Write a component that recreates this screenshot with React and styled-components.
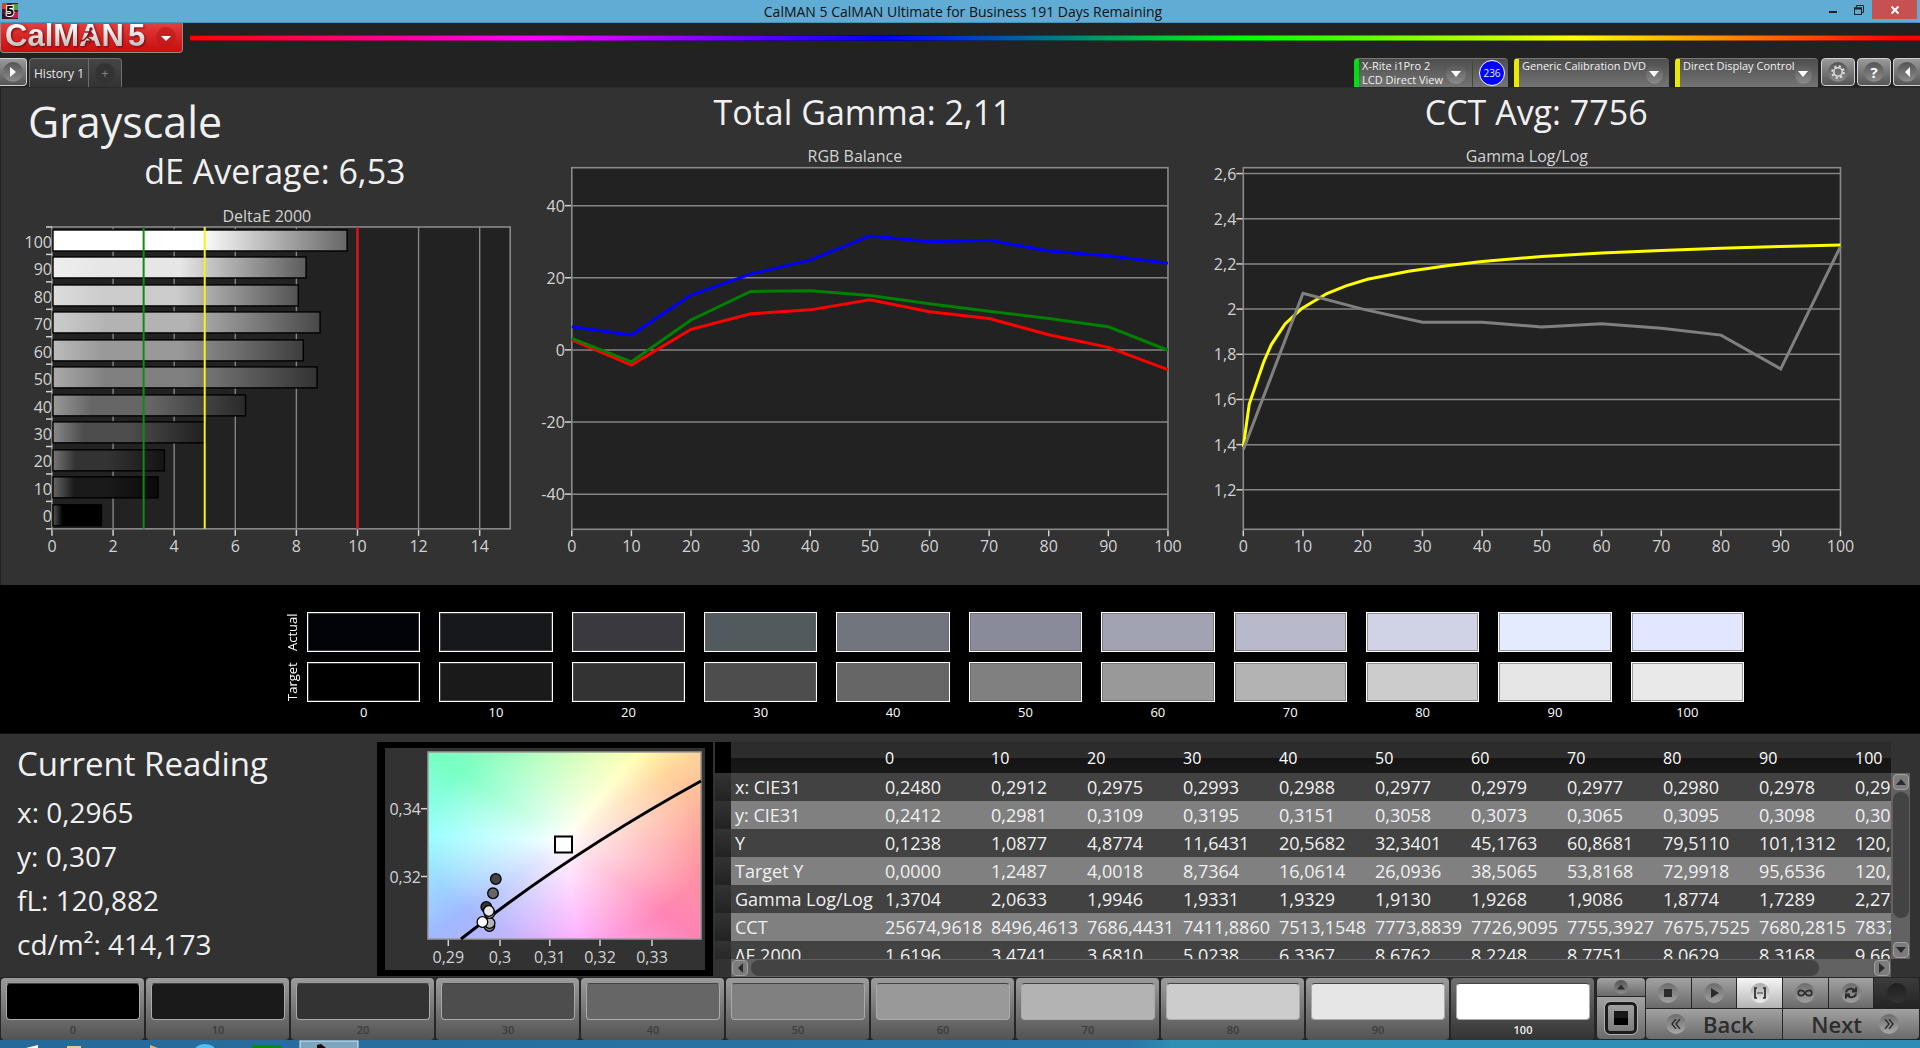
import styled, { createGlobalStyle, css } from 'styled-components';

const GlobalStyle = createGlobalStyle`
  * { box-sizing: border-box; }
  body {
    margin: 0;
    background: #323232;
    color: #f0f0f0;
    font-family: "Open Sans", "Noto Sans", sans-serif;
    overflow: hidden;
  }
  button {
    border: 0;
    padding: 0;
    font-family: inherit;
    color: inherit;
    background: none;
  }
`;

/* ---------- data ---------- */

const levels = [0, 10, 20, 30, 40, 50, 60, 70, 80, 90, 100];
const grays = [0, 26, 51, 77, 102, 128, 153, 179, 204, 230, 255];

const actual = ['#020308', '#16181c', '#3a393f', '#535a5d', '#71757e', '#8a8b9a', '#a1a3b2', '#b9b9cc', '#d0d3e6', '#e5ebff', '#e2e6ff'];
const target = ['#000000', '#1a1a1a', '#333333', '#4d4d4d', '#666666', '#808080', '#999999', '#b3b3b3', '#cccccc', '#e6e6e6', '#e9e9e9'];

const deltaE = [1.6196, 3.4741, 3.681, 5.0238, 6.3367, 8.6762, 8.2248, 8.7751, 8.0629, 8.3168, 9.66];

const rgbLines = [
  { color: '#0000ff', values: [6.4, 4.1, 15.2, 21, 24.9, 31.6, 30, 30.4, 27.4, 26.1, 24] },
  { color: '#ff0000', values: [2.8, -4.2, 5.7, 10, 11.1, 13.9, 10.6, 8.7, 4.2, 0.7, -5.5] },
  { color: '#008000', values: [3.2, -3.3, 8.3, 16.2, 16.4, 15.1, 12.8, 10.7, 8.7, 6.4, -0.1] },
];

const gammaTarget = [
  [0, 1.39], [1, 1.58], [3.4, 1.765], [4.7, 1.843], [7, 1.934], [9.8, 2.003], [14, 2.069],
  [17.2, 2.103], [20.8, 2.132], [27.7, 2.168], [34.4, 2.193], [40, 2.211], [50, 2.233],
  [60, 2.248], [70, 2.26], [80, 2.269], [90, 2.277], [100, 2.284],
];
const gammaMeasured = [1.378, 2.07, 2.0, 1.942, 1.942, 1.921, 1.935, 1.915, 1.885, 1.735, 2.277];

const rows = [
  ['x: CIE31', '0,2480', '0,2912', '0,2975', '0,2993', '0,2988', '0,2977', '0,2979', '0,2977', '0,2980', '0,2978', '0,2965'],
  ['y: CIE31', '0,2412', '0,2981', '0,3109', '0,3195', '0,3151', '0,3058', '0,3073', '0,3065', '0,3095', '0,3098', '0,3070'],
  ['Y', '0,1238', '1,0877', '4,8774', '11,6431', '20,5682', '32,3401', '45,1763', '60,8681', '79,5110', '101,1312', '120,8820'],
  ['Target Y', '0,0000', '1,2487', '4,0018', '8,7364', '16,0614', '26,0936', '38,5065', '53,8168', '72,9918', '95,6536', '120,8820'],
  ['Gamma Log/Log', '1,3704', '2,0633', '1,9946', '1,9331', '1,9329', '1,9130', '1,9268', '1,9086', '1,8774', '1,7289', '2,2740'],
  ['CCT', '25674,9618', '8496,4613', '7686,4431', '7411,8860', '7513,1548', '7773,8839', '7726,9095', '7755,3927', '7675,7525', '7680,2815', '7837,0000'],
  ['ΔE 2000', '1,6196', '3,4741', '3,6810', '5,0238', '6,3367', '8,6762', '8,2248', '8,7751', '8,0629', '8,3168', '9,6600'],
];

/* ---------- window chrome ---------- */

const Page = styled.div`
  display: flex;
  flex-direction: column;
`;

const TitleBar = styled.header`
  display: flex;
  align-items: flex-start;
  height: 23px;
  background: #60acd5;
  border-bottom: 1px solid #4a8fb5;
  color: #111;
`;

const AppIcon = styled.svg`
  margin: 3px 0 0 2px;
  overflow: visible;
`;

const WindowTitle = styled.span`
  flex: 1;
  padding-left: 88px;
  text-align: center;
  font-size: 14px;
  line-height: 23px;
`;

const WindowButtons = styled.div`
  display: flex;
  margin-right: 3px;
`;

const WindowButton = styled.button`
  display: flex;
  align-items: center;
  justify-content: center;
  width: ${({ $close }) => ($close ? 45 : 26)}px;
  height: 19px;
  background: ${({ $close }) => ($close ? '#c75050' : 'transparent')};
`;

const Header = styled.div`
  background: #222;
  border-bottom: 1px solid #2a2a2a;
`;

const BrandRow = styled.div`
  display: flex;
  gap: 7px;
`;

const Brand = styled.button`
  display: flex;
  width: 183px;
  height: 30px;
  border: 1px solid #8c8c8c;
  border-top: 0;
  border-radius: 0 0 4px 4px;
  background: linear-gradient(#e24040, #d62424 50%, #c90d0d);
`;

const LogoSvg = styled.svg`
  overflow: visible;
  text {
    font: 700 31px "Liberation Sans", sans-serif;
    fill: url(#metal);
    filter: drop-shadow(1px 1px 1px rgba(90, 0, 0, 0.8));
  }
`;

const Rainbow = styled.div`
  flex: 1;
  height: 6px;
  margin-top: 12px;
  border-top: 1px solid rgba(0, 0, 0, 0.4);
  border-bottom: 1px solid rgba(0, 0, 0, 0.4);
  background: linear-gradient(90deg, #f00, #f0f 20%, #00f 40%, #0f0 61%, #ff0 80%, #f00 99%);
`;

const TabRow = styled.div`
  display: flex;
  justify-content: space-between;
  padding-top: 5px;
`;

const Group = styled.div`
  display: flex;
  align-items: flex-start;
  gap: ${({ $gap }) => $gap || 0}px;
`;

const ToolButton = styled.button`
  display: flex;
  align-items: center;
  justify-content: center;
  width: ${({ $w }) => $w}px;
  height: 28px;
  border: 1px solid #d0d0d0;
  border-radius: ${({ $radius }) => $radius || '4px'};
  ${({ $side }) => $side && css`border-${$side}: 0;`}
  background: linear-gradient(#9a9a9a, #555);
`;

const Round = styled.span`
  display: flex;
  align-items: center;
  justify-content: center;
  width: ${({ $d }) => $d || 20}px;
  height: ${({ $d }) => $d || 20}px;
  border-radius: 50%;
  background: ${({ $bg }) => $bg || 'linear-gradient(#555, #8c8c8c)'};
`;

const HelpMark = styled(Round)`
  color: #fff;
  font-size: 15px;
  font-weight: 700;
  line-height: 20px;
`;

const Tabs = styled.div`
  display: flex;
  height: 29px;
  margin-left: 2px;
  border: 1px solid #6e6e6e;
  border-bottom: 0;
  border-radius: 4px 4px 0 0;
  background: linear-gradient(#454545, #333);
`;

const Tab = styled.button`
  display: flex;
  align-items: center;
  justify-content: center;
  width: ${({ $w }) => $w}px;
  font-size: 12px;
  color: #e8e8e8;
  & + & {
    border-left: 1px solid #6e6e6e;
    color: #888;
  }
`;

const Device = styled.div`
  display: flex;
  height: 29px;
  border-left: 5px solid ${({ $mark }) => $mark};
  border-top: 1px solid #777;
  border-radius: 4px 4px 0 0;
  background: linear-gradient(#4e4e4e, #747474);
`;

const DeviceButton = styled.button`
  display: flex;
  justify-content: space-between;
  width: ${({ $w }) => $w}px;
  padding: 0 6px 0 3px;
  font-size: 11px;
  line-height: 14px;
  text-align: left;
  white-space: nowrap;
  ${Round} { margin-top: 5px; }
`;

const Counter = styled.span`
  display: flex;
  align-items: center;
  justify-content: center;
  width: 26px;
  height: 26px;
  margin: 1px 3px 0 6px;
  border: 1px solid #fff;
  border-radius: 50%;
  background: #00f;
  font-size: 10px;
`;

const Divider = styled.span`
  width: 1px;
  margin-top: 2px;
  background: #444;
`;

/* ---------- charts ---------- */

const Charts = styled.section`
  display: grid;
  grid-template-columns: 540fr 660fr 720fr;
  align-items: start;
  padding-bottom: 15px;
  border-left: 1px solid #222;
`;

const Heading = styled.h1`
  margin: 0;
  padding: 9px 0 0 27px;
  font-size: 43px;
  font-weight: 400;
  line-height: 50px;
`;

const Metric = styled.h2`
  margin: 0;
  padding: 0 ${({ $right }) => $right || 0}px 0 ${({ $left }) => $left || 0}px;
  font-size: 34px;
  font-weight: 400;
  line-height: 48px;
  text-align: center;
`;

const ChartSvg = styled.svg`
  display: block;
  width: 100%;
  margin-top: 9px;
  font-size: 16px;
`;

const gridColor = '#858585';
const labelColor = '#d2d2d2';

function Frame({ box }) {
  return <rect x={box.x} y={box.y} width={box.w} height={box.h} fill="none" stroke="#8a8a8a" strokeWidth="1.6" />;
}

function BottomAxis({ box, ticks, scale }) {
  const y = box.y + box.h;
  return ticks.map((t) => (
    <g key={t}>
      <line x1={scale(t)} x2={scale(t)} y1={y + 1} y2={y + 7} stroke={labelColor} strokeWidth="1.5" />
      <text x={scale(t)} y={y + 23} textAnchor="middle" fill={labelColor}>{t}</text>
    </g>
  ));
}

function DeltaChart() {
  const box = { x: 51, y: 23, w: 458.5, h: 302 };
  const x = (v) => box.x + (v * box.w) / 15;
  const band = box.h / 11;
  const ticks = [0, 2, 4, 6, 8, 10, 12, 14];
  return (
    <ChartSvg viewBox="0 0 540 366">
      <defs>
        {grays.map((g, i) => {
          const light = Math.round(g + (255 - g) * 0.33);
          const dark = Math.round(g * 0.4);
          return (
            <linearGradient id={`bar${i}`} key={g}>
              <stop offset="0" stopColor={`rgb(${light},${light},${light})`} />
              <stop offset="0.2" stopColor={`rgb(${g},${g},${g})`} />
              <stop offset="0.5" stopColor={`rgb(${g},${g},${g})`} />
              <stop offset="1" stopColor={`rgb(${dark},${dark},${dark})`} />
            </linearGradient>
          );
        })}
      </defs>
      <text x="266" y="18" textAnchor="middle" fill={labelColor}>DeltaE 2000</text>
      <rect x={box.x} y={box.y} width={box.w} height={box.h} fill="#222" />
      {ticks.slice(1).map((t) => (
        <line key={t} x1={x(t)} x2={x(t)} y1={box.y} y2={box.y + box.h} stroke={gridColor} strokeWidth="1.4" />
      ))}
      <Frame box={box} />
      {levels.map((level, i) => {
        const top = box.y + (10 - i) * band;
        return (
          <g key={level}>
            <rect x={box.x + 1} y={Math.round(top + 3)} width={x(deltaE[i]) - box.x - 1} height="21" fill={`url(#bar${i})`} stroke="#000" strokeWidth="1.4" />
            <line x1={box.x - 6} x2={box.x} y1={top} y2={top} stroke={labelColor} strokeWidth="1.5" />
            <text x={box.x} y={top + 21} textAnchor="end" fill={labelColor}>{level}</text>
          </g>
        );
      })}
      <line x1={box.x - 6} x2={box.x} y1={box.y + box.h} y2={box.y + box.h} stroke={labelColor} strokeWidth="1.5" />
      {[[3, '#108a10'], [5, '#f7f01c'], [10, '#ff0808']].map(([v, color]) => (
        <line key={v} x1={x(v)} x2={x(v)} y1={box.y} y2={box.y + box.h} stroke={color} strokeWidth="2" />
      ))}
      <BottomAxis box={box} ticks={ticks} scale={x} />
    </ChartSvg>
  );
}

function LineChart({ title, width, box, ticks, y, children }) {
  const x = (v) => box.x + (v * box.w) / 100;
  return (
    <ChartSvg viewBox={`0 0 ${width} 425`}>
      <text x={box.x + box.w / 2 - 15} y="17" textAnchor="middle" fill={labelColor}>{title}</text>
      <rect x={box.x} y={box.y} width={box.w} height={box.h} fill="#222" />
      {ticks.map((t) => (
        <g key={t}>
          <line x1={box.x} x2={box.x + box.w} y1={y(t)} y2={y(t)} stroke={gridColor} strokeWidth="1.5" />
          <line x1={box.x - 7} x2={box.x} y1={y(t)} y2={y(t)} stroke={labelColor} strokeWidth="1.5" />
          <text x={box.x - 7} y={y(t) + 6} textAnchor="end" fill={labelColor}>{String(t).replace('.', ',')}</text>
        </g>
      ))}
      <Frame box={box} />
      {children(x)}
      <BottomAxis box={box} ticks={levels} scale={x} />
    </ChartSvg>
  );
}

function RgbChart() {
  const y = (v) => 205 - v * 3.608;
  return (
    <LineChart title="RGB Balance" width={660} box={{ x: 30.8, y: 22.7, w: 596.5, h: 361.8 }} ticks={[40, 20, 0, -20, -40]} y={y}>
      {(x) => rgbLines.map(({ color, values }) => (
        <polyline
          key={color}
          points={values.map((v, i) => `${x(i * 10)},${y(v)}`).join(' ')}
          fill="none"
          stroke={color}
          strokeWidth="3"
        />
      ))}
    </LineChart>
  );
}

function GammaChart() {
  const y = (v) => 28.6 + (2.6 - v) * 226;
  return (
    <LineChart title="Gamma Log/Log" width={720} box={{ x: 43.3, y: 22.7, w: 597.5, h: 361.8 }} ticks={[2.6, 2.4, 2.2, 2, 1.8, 1.6, 1.4, 1.2]} y={y}>
      {(x) => (
        <>
          <polyline points={gammaTarget.map(([a, b]) => `${x(a)},${y(b)}`).join(' ')} fill="none" stroke="#ffff00" strokeWidth="3" />
          <polyline points={gammaMeasured.map((v, i) => `${x(i * 10)},${y(v)}`).join(' ')} fill="none" stroke="#808080" strokeWidth="3" />
        </>
      )}
    </LineChart>
  );
}

/* ---------- swatches ---------- */

const SwatchBand = styled.section`
  padding: 27px 176px 11px 282px;
  background: #000;
`;

const SwatchRow = styled.div`
  display: grid;
  grid-template-columns: 25px 1fr;
  margin-bottom: ${({ $gap }) => $gap || 0}px;
`;

const SwatchName = styled.span`
  writing-mode: vertical-rl;
  transform: rotate(180deg);
  height: 40px;
  font-size: 13px;
  line-height: 21px;
  text-align: center;
  white-space: nowrap;
  color: #fff;
`;

const SwatchGrid = styled.div`
  display: grid;
  grid-template-columns: repeat(11, 1fr);
  gap: 19px;
  font-size: 13px;
  line-height: 20px;
  text-align: center;
  color: #fff;
`;

const Swatch = styled.div`
  height: 40px;
  border: 1px solid #fff;
  box-shadow: inset 0 0 0 1px rgba(100, 100, 100, 0.6);
  background: ${({ $color }) => $color};
`;

/* ---------- readings ---------- */

const Bottom = styled.section`
  display: flex;
  padding: 8px 10px 0 17px;
  border-top: 1px solid #111;
`;

const Reading = styled.div`
  width: 360px;
  font-size: 28px;
  line-height: 44px;
  h2 {
    margin: 0 0 4px;
    font-size: 33px;
    font-weight: 400;
    line-height: 44px;
  }
  p { margin: 0; }
`;

const CiePanel = styled.div`
  height: 234px;
  padding: 6px 8px;
  background: #000;
`;

/* chromaticity colours around the white point */
const CieSvg = styled.svg`
  display: block;
  font-size: 16px;
  background:
    radial-gradient(ellipse at 50% 47%, #fff 0, rgba(255, 255, 255, 0.7) 18%, rgba(255, 255, 255, 0) 72%) 43px 4px / 273px 187px no-repeat,
    conic-gradient(from 0deg at 50% 47%, #c4ffb4 0deg, #ffffb4 41deg, #ffd49a 57deg, #ff9c9c 92deg, #ff84b4 126deg, #ffb0ff 172deg, #a0b8ff 234deg, #98ffff 272deg, #78ffc4 303deg, #c4ffb4 360deg) 43px 4px / 273px 187px no-repeat,
    #323232;
`;

function CieChart() {
  const dots = [
    [110.8, 131, '#444'], [108, 145.3, '#666'], [101.3, 159, '#333'], [104.4, 178, '#808080'],
    [104.6, 175, '#b3b3b3'], [104.5, 165, '#ccc'], [103.8, 163, '#e6e6e6'], [97.4, 174, '#fff'],
  ];
  return (
    <CieSvg width="320" height="222" viewBox="0 0 320 222">
      <rect x="43" y="4" width="273" height="187" fill="none" stroke="#999" strokeWidth="1.5" />
      <path d="M76 191Q185 105 316 33" fill="none" stroke="#000" strokeWidth="3" />
      <rect x="170" y="88.5" width="17" height="16" fill="#fff" stroke="#000" strokeWidth="2" />
      {dots.map(([cx, cy, fill]) => (
        <circle key={`${cx}-${cy}`} cx={cx} cy={cy} r="5.3" fill={fill} stroke="#000" strokeWidth="1.3" />
      ))}
      {[['0,34', 60.7], ['0,32', 128.5]].map(([t, y]) => (
        <g key={t}>
          <line x1="36" x2="42" y1={y} y2={y} stroke={labelColor} strokeWidth="1.5" />
          <text x="36" y={y + 6} textAnchor="end" fill={labelColor}>{t}</text>
        </g>
      ))}
      {[['0,29', 63.3], ['0,3', 115], ['0,31', 164.8], ['0,32', 215], ['0,33', 267]].map(([t, x]) => (
        <g key={t}>
          <line x1={x} x2={x} y1="192" y2="198" stroke={labelColor} strokeWidth="1.5" />
          <text x={x} y="215" textAnchor="middle" fill={labelColor}>{t}</text>
        </g>
      ))}
    </CieSvg>
  );
}

const DataPanel = styled.div`
  flex: 1;
  min-width: 0;
  display: grid;
  grid-template-columns: 1fr 19px;
  grid-template-rows: 217px 18px;
  margin-left: 2px;
`;

const TableClip = styled.div`
  overflow: hidden;
`;

const Table = styled.table`
  width: 1231px;
  table-layout: fixed;
  border-collapse: collapse;
  font-size: 18px;
  white-space: nowrap;
  th, td {
    padding: 0 0 0 5px;
    font-weight: 400;
    text-align: left;
    line-height: 28px;
  }
  tbody th { padding-left: 4px; }
  thead th {
    height: 31px;
    padding-top: 1px;
    font-size: 16px;
    color: #fff;
    background: linear-gradient(#2c2c2c, #2c2c2c 50%, #141414 51%, #181818);
  }
  thead td { background: #000; }
  tbody td:first-child { background: linear-gradient(#333, #222); }
`;

const Row = styled.tr`
  height: 28px;
  background: ${({ $odd }) => ($odd ? '#808080' : '#424242')};
`;

const VScroll = styled.div`
  display: flex;
  flex-direction: column;
  align-items: center;
  margin-top: 31px;
  padding: 1px;
  background: #626262;
`;

const HScroll = styled.div`
  display: flex;
  align-items: center;
  margin-left: 16px;
  padding: 1px;
  background: #626262;
`;

const ScrollButton = styled.button`
  display: flex;
  flex: none;
  align-items: center;
  justify-content: center;
  width: 16px;
  height: 16px;
  border: 1px solid #a0a0a0;
  border-radius: 4px;
  background: #7c7c7c;
`;

const VThumb = styled.div`
  width: 16px;
  height: 126px;
  margin: 2px 0 auto;
  border-radius: 8px;
  background: #434343;
`;

const HThumb = styled.div`
  flex: 1;
  height: 16px;
  margin: 0 55px 0 3px;
  border-radius: 8px;
  background: #434343;
`;

/* ---------- pattern bar ---------- */

const PatternBar = styled.footer`
  display: flex;
  gap: 3px;
  height: 63px;
  padding: 1px;
  background: #262626;
`;

const Patches = styled.div`
  flex: 1;
  display: grid;
  grid-template-columns: repeat(11, 1fr);
  gap: 2px;
`;

const Patch = styled.button`
  display: flex;
  flex-direction: column;
  padding: 5px 4px 0 5px;
  border-radius: 4px;
  background: ${({ $on }) => ($on ? 'linear-gradient(#707070, #333)' : 'linear-gradient(#9c9c9c, #525252)')};
  color: ${({ $on }) => ($on ? '#eee' : '#3c3c3c')};
  font-size: 11px;
  font-weight: 600;
  line-height: 20px;
`;

const PatchColor = styled.span`
  width: 100%;
  height: 37px;
  border: 1px solid #aaa;
  border-top-color: #444;
  border-radius: 4px;
  background: ${({ $color }) => $color};
`;

const PatchLabel = styled.span`
  width: 100%;
`;

const Controls = styled.div`
  display: grid;
  grid-template-columns: 48px 273px;
  gap: 1px;
`;

const Stack = styled.div`
  display: grid;
  grid-template-rows: ${({ $top }) => $top}px 1fr;
  gap: 1px;
  overflow: hidden;
  border-radius: 4px;
`;

const Cells = styled.div`
  display: grid;
  grid-template-columns: repeat(${({ $n }) => $n}, 1fr);
  gap: 1px;
`;

const cellBg = {
  normal: 'linear-gradient(#a2a2a2, #6a6a6a)',
  active: 'linear-gradient(#f6f6f6, #b4b4b4)',
  off: 'linear-gradient(#3c3c3c, #242424)',
};

const Cell = styled.button`
  display: flex;
  align-items: center;
  justify-content: center;
  gap: ${({ $gap }) => $gap || 0}px;
  background: ${({ $kind }) => cellBg[$kind || 'normal']};
  color: #2c2c2c;
  font-size: 22px;
  line-height: 28px;
  font-weight: 600;
`;

const StepCell = styled(Cell)`
  justify-content: ${({ $side }) => ($side === 'left' ? 'flex-start' : 'flex-end')};
  padding: 0 20px;
`;

const StopFrame = styled.span`
  display: flex;
  align-items: center;
  justify-content: center;
  width: 32px;
  height: 32px;
  border: 3px solid #1c1c1c;
  border-radius: 5px;
  outline: 1px solid #b0b0b0;
  background: linear-gradient(#a0a0a0, #7c7c7c);
`;

const Taskbar = styled.div`
  height: 8px;
  overflow: hidden;
  background: linear-gradient(90deg, #25699a, #2a76a8 59%, #2f8fb4 61%, #2e8cb6);
  svg { display: block; }
`;

function Triangle({ dir = 'down', color = '#fff', size = 10 }) {
  const shapes = {
    down: '0,2 10,2 5,8',
    up: '0,8 10,8 5,2',
    left: '8,0 8,10 3,5',
    right: '2,0 2,10 8,5',
  };
  return (
    <svg width={size} height={size} viewBox="0 0 10 10">
      <polygon points={shapes[dir]} fill={color} />
    </svg>
  );
}

function Logo() {
  return (
    <LogoSvg width="181" height="29" viewBox="0 0 181 29">
      <defs>
        <linearGradient id="metal" x1="0" y1="0" x2="0" y2="1">
          <stop offset="0.2" stopColor="#fff" />
          <stop offset="0.85" stopColor="#bcbcbc" />
        </linearGradient>
      </defs>
      <text x="4" y="23">CalMAN</text>
      <text x="127" y="23">5</text>
      <g stroke="#8a1414" strokeWidth="1.5" fill="none" strokeLinecap="round">
        <path d="M89 9L86 14L90 17L88 21M86 14L83 17L80 18M84 9H89L92 12" />
        <circle cx="90" cy="6" r="1" fill="#8a1414" />
      </g>
      <circle cx="165" cy="14" r="10" fill="#c0181c" opacity="0.7" />
      <polygon points="160,13 170,13 165,18" fill="#fff" />
    </LogoSvg>
  );
}

function GearIcon() {
  return (
    <svg width="14" height="14" viewBox="0 0 14 14" fill="none" stroke="#ddd">
      <circle cx="7" cy="7" r="4.2" strokeWidth="1.5" />
      <circle cx="7" cy="7" r="5.8" strokeWidth="2" strokeDasharray="2.2 2.355" />
    </svg>
  );
}

const dark = '#2b2b2b';

const transport = [
  { name: 'Stop', icon: <rect x="2" y="2" width="8" height="8" fill={dark} /> },
  { name: 'Play', icon: <polygon points="3,1 11,6 3,11" fill={dark} /> },
  {
    name: 'Read series',
    kind: 'active',
    icon: <path d="M3 1H1V11H3M9 1H11V11H9M3.4 6H4.6M5.4 6H6.6M7.4 6H8.6" stroke={dark} strokeWidth="1.7" fill="none" />,
  },
  {
    name: 'Continuous',
    icon: <path d="M6 6C4 2.500 -.8 2.500 -.8 6S4 9.500 6 6S12.800 2.500 12.800 6S8 9.500 6 6Z" stroke={dark} strokeWidth="1.6" fill="none" />,
  },
  {
    name: 'Refresh',
    icon: <path d="M1 5.500C1.500 1.500 7 .5 9.500 3.500M11 .5V4.500H7M11 6.500C10.500 10.500 5 11.500 2.500 8.500M1 11.500V7.500H5" stroke={dark} strokeWidth="2" fill="none" />,
  },
];

export default function App() {
  return (
    <Page>
      <GlobalStyle />

      <TitleBar>
        <AppIcon width="16" height="16" viewBox="0 0 16 16">
          <rect width="16" height="16" fill="#5a1520" />
          <rect width="5" height="6" fill="#d84020" />
          <rect x="10" y="1" width="6" height="6" fill="#4f9c50" />
          <rect x="10" y="9" width="6" height="6" fill="#c0205a" />
          <rect y="11" width="6" height="5" fill="#401018" />
          <text x="4" y="13" fontSize="14" fontWeight="700" fill="#000" stroke="#fff" strokeWidth="2" paintOrder="stroke">5</text>
        </AppIcon>
        <WindowTitle>CalMAN 5 CalMAN Ultimate for Business 191 Days Remaining</WindowTitle>
        <WindowButtons>
          <WindowButton aria-label="Minimize">
            <svg width="8" height="8"><rect y="5" width="8" height="2" fill="#222" /></svg>
          </WindowButton>
          <WindowButton aria-label="Restore">
            <svg width="10" height="10" fill="none" stroke="#222">
              <path d="M2.500 2V.5H9.500V7.500H8" />
              <rect x="0.500" y="3" width="7" height="6.500" />
              <path d="M0 3.500H8" strokeWidth="2" />
            </svg>
          </WindowButton>
          <WindowButton $close aria-label="Close">
            <svg width="8" height="8"><path d="M0.500 0.500L7.500 7.500M7.500 .5L.5 7.500" stroke="#fff" strokeWidth="2" /></svg>
          </WindowButton>
        </WindowButtons>
      </TitleBar>

      <Header>
        <BrandRow>
          <Brand aria-label="CalMAN 5 menu"><Logo /></Brand>
          <Rainbow />
        </BrandRow>
        <TabRow>
          <Group>
            <ToolButton $w={27} $side="left" $radius="0 4px 4px 0" aria-label="Expand">
              <Round><Triangle dir="right" /></Round>
            </ToolButton>
            <Tabs>
              <Tab $w={58}>History 1</Tab>
              <Tab $w={33} aria-label="Add history"><Round $bg="#333">+</Round></Tab>
            </Tabs>
          </Group>
          <Group $gap={3}>
            <Group $gap={6}>
              <Device $mark="#00e010">
                <DeviceButton $w={113}>
                  <span>X-Rite i1Pro 2<br />LCD Direct View</span>
                  <Round><Triangle /></Round>
                </DeviceButton>
                <Divider />
                <Counter>236</Counter>
              </Device>
              <Device $mark="#eaea00">
                <DeviceButton $w={150}>
                  <span>Generic Calibration DVD</span>
                  <Round><Triangle /></Round>
                </DeviceButton>
              </Device>
              <Device $mark="#eaea00">
                <DeviceButton $w={138}>
                  <span>Direct Display Control</span>
                  <Round><Triangle /></Round>
                </DeviceButton>
              </Device>
            </Group>
            <Group $gap={2}>
              <ToolButton $w={34} aria-label="Settings"><Round><GearIcon /></Round></ToolButton>
              <ToolButton $w={34} aria-label="Help"><HelpMark>?</HelpMark></ToolButton>
              <ToolButton $w={27} $side="right" $radius="4px 0 0 4px" aria-label="Collapse">
                <Round><Triangle dir="left" /></Round>
              </ToolButton>
            </Group>
          </Group>
        </TabRow>
      </Header>

      <Charts>
        <div>
          <Heading>Grayscale</Heading>
          <Metric $left={8}>dE Average: 6,53</Metric>
          <DeltaChart />
        </div>
        <div>
          <Metric $right={16}>Total Gamma: 2,11</Metric>
          <RgbChart />
        </div>
        <div>
          <Metric $right={48}>CCT Avg: 7756</Metric>
          <GammaChart />
        </div>
      </Charts>

      <SwatchBand>
        <SwatchRow $gap={10}>
          <SwatchName>Actual</SwatchName>
          <SwatchGrid>{actual.map((c, i) => <Swatch key={levels[i]} $color={c} />)}</SwatchGrid>
        </SwatchRow>
        <SwatchRow>
          <SwatchName>Target</SwatchName>
          <SwatchGrid>{target.map((c) => <Swatch key={c} $color={c} />)}</SwatchGrid>
        </SwatchRow>
        <SwatchRow>
          <span />
          <SwatchGrid>{levels.map((l) => <span key={l}>{l}</span>)}</SwatchGrid>
        </SwatchRow>
      </SwatchBand>

      <Bottom>
        <Reading>
          <h2>Current Reading</h2>
          <p>x: 0,2965</p>
          <p>y: 0,307</p>
          <p>fL: 120,882</p>
          <p>cd/m²: 414,173</p>
        </Reading>
        <CiePanel><CieChart /></CiePanel>
        <DataPanel>
          <TableClip>
            <Table>
              <colgroup>
                <col width="16" />
                <col width="149" />
                <col width="106" />
                {levels.slice(1).map((l) => <col key={l} width="96" />)}
              </colgroup>
              <thead>
                <tr>
                  <td />
                  <th />
                  {levels.map((l) => <th key={l} scope="col">{l}</th>)}
                </tr>
              </thead>
              <tbody>
                {rows.map(([name, ...values], r) => (
                  <Row key={name} $odd={r % 2 === 1}>
                    <td />
                    <th scope="row">{name}</th>
                    {values.map((v, i) => <td key={levels[i]}>{v}</td>)}
                  </Row>
                ))}
              </tbody>
            </Table>
          </TableClip>
          <VScroll>
            <ScrollButton aria-label="Scroll up"><Triangle dir="up" color={dark} /></ScrollButton>
            <VThumb />
            <ScrollButton aria-label="Scroll down"><Triangle color={dark} /></ScrollButton>
          </VScroll>
          <HScroll>
            <ScrollButton aria-label="Scroll left"><Triangle dir="left" color={dark} /></ScrollButton>
            <HThumb />
            <ScrollButton aria-label="Scroll right"><Triangle dir="right" color={dark} /></ScrollButton>
          </HScroll>
        </DataPanel>
      </Bottom>

      <PatternBar>
        <Patches>
          {levels.map((l, i) => (
            <Patch key={l} $on={l === 100}>
              <PatchColor $color={l === 100 ? '#fff' : target[i]} />
              <PatchLabel>{l}</PatchLabel>
            </Patch>
          ))}
        </Patches>
        <Controls>
          <Stack $top={18}>
            <Cell aria-label="Show more"><Round $d={14}><Triangle dir="up" color={dark} size={8} /></Round></Cell>
            <Cell aria-label="Pattern window">
              <StopFrame><svg width="14" height="14"><rect width="14" height="14" /><rect width="14" height="7" fill="#181818" /></svg></StopFrame>
            </Cell>
          </Stack>
          <Stack $top={30}>
            <Cells $n={6}>
              {transport.map(({ name, kind, icon }) => (
                <Cell key={name} $kind={kind} aria-label={name}>
                  <Round $bg={kind ? 'linear-gradient(#a8a8a8, #eee)' : 'linear-gradient(#6c6c6c, #a0a0a0)'}>
                    <svg width="12" height="12" viewBox="0 0 12 12" overflow="visible">{icon}</svg>
                  </Round>
                </Cell>
              ))}
              <Cell $kind="off" aria-label="Unavailable"><Round $bg="linear-gradient(#1e1e1e, #333)" /></Cell>
            </Cells>
            <Cells $n={2}>
              <StepCell $side="left" $gap={17}>
                <Round $bg="linear-gradient(#6c6c6c, #a8a8a8)">
                  <svg width="10" height="10" viewBox="0 0 10 10" fill="none" stroke={dark} strokeWidth="1.4"><path d="M5 0L1 5L5 10M9 0L5 5L9 10" /></svg>
                </Round>
                Back
              </StepCell>
              <StepCell $side="right" $gap={17}>
                Next
                <Round $bg="linear-gradient(#6c6c6c, #a8a8a8)">
                  <svg width="10" height="10" viewBox="0 0 10 10" fill="none" stroke={dark} strokeWidth="1.4"><path d="M1 0L5 5L1 10M5 0L9 5L5 10" /></svg>
                </Round>
              </StepCell>
            </Cells>
          </Stack>
        </Controls>
      </PatternBar>

      <Taskbar>
        <svg width="400" height="8">
          <path d="M26 8L38 5V8Z" fill="#fff" />
          <rect x="67" y="6" width="14" height="2" fill="#e0cf8a" />
          <path d="M150 5L158 8H150Z" fill="#e8b070" />
          <ellipse cx="205" cy="10" rx="10" ry="6" fill="#4fc0ee" />
          <rect x="252" y="5" width="30" height="3" fill="#0a8a10" />
          <rect x="300" y="1" width="58" height="9" fill="#7ca5be" stroke="#dceaf2" />
          <path d="M317 5L321 4L326 8H317Z" fill="#200808" />
        </svg>
      </Taskbar>
    </Page>
  );
}
